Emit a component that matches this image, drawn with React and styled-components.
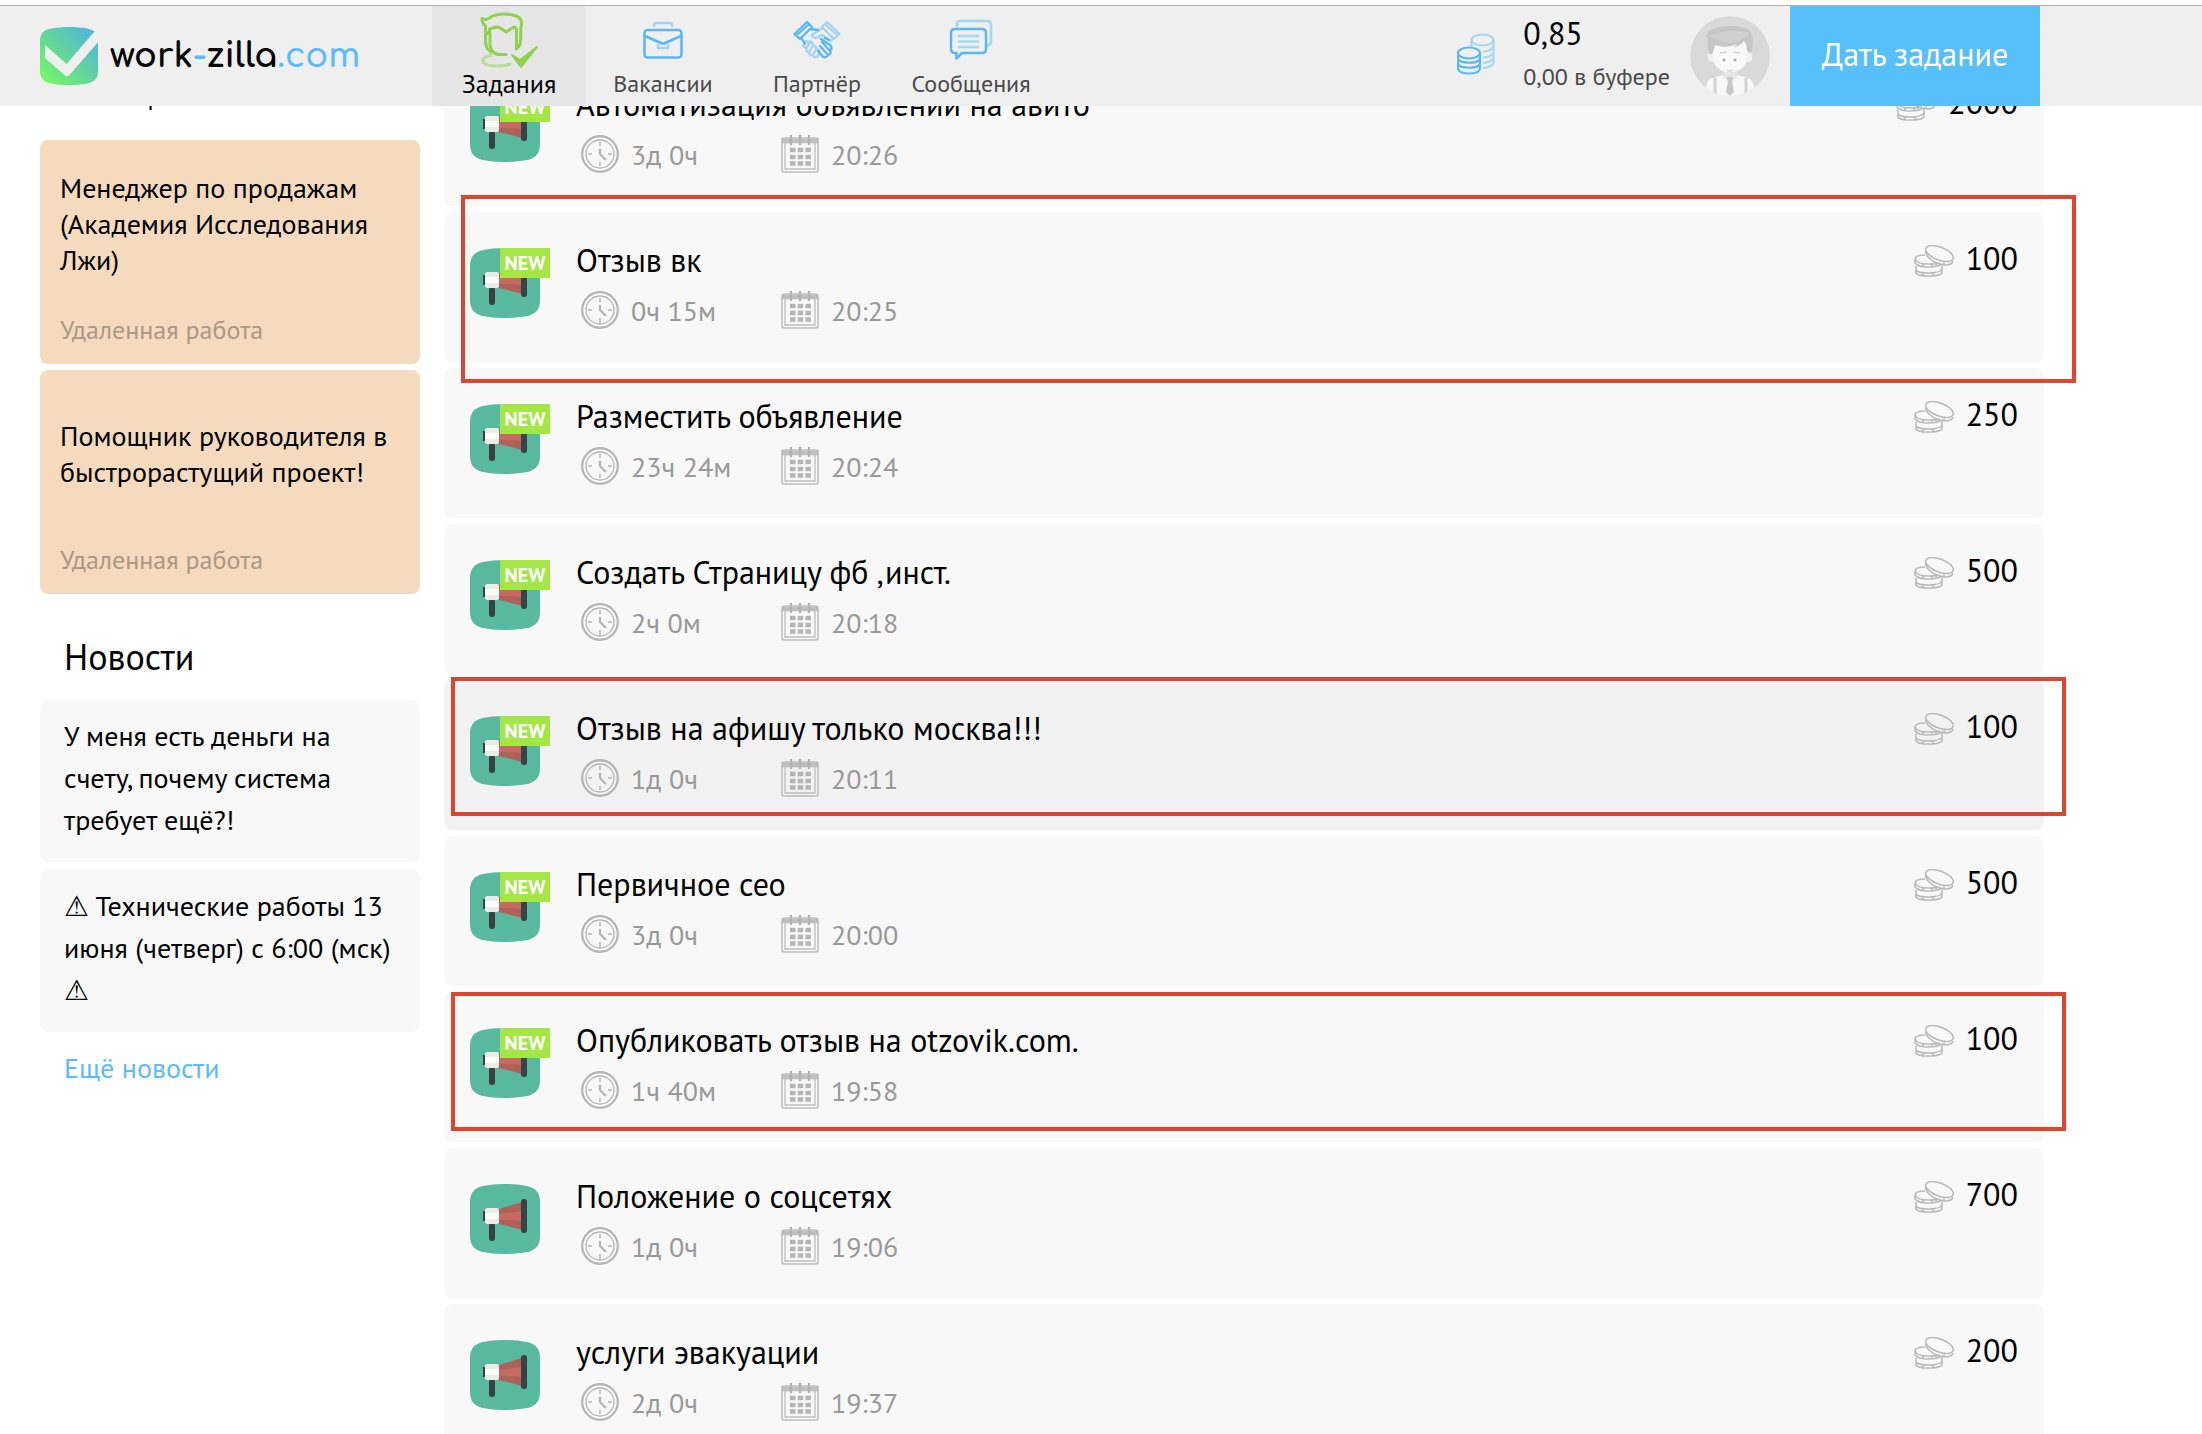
import React from "react";
import styled, { createGlobalStyle, css } from "styled-components";

const vacancies = [
  { id: 1, title: "Менеджер по продажам (Академия Исследования Лжи)", place: "Удаленная работа" },
  { id: 2, title: "Помощник руководителя в быстрорастущий проект!", place: "Удаленная работа" },
];

const news = [
  { id: 1, text: "У меня есть деньги на счету, почему система требует ещё?!" },
  { id: 2, text: "⚠\uFE0E Технические работы 13 июня (четверг) с 6:00 (мск) ⚠\uFE0E" },
];

const tasks = [
  { id: 1, title: "Автоматизация объявлений на авито", term: "3д 0ч", time: "20:26", price: 2000, isNew: true },
  { id: 2, title: "Отзыв вк", term: "0ч 15м", time: "20:25", price: 100, isNew: true, mark: "-17px -32px -21px 17px" },
  { id: 3, title: "Разместить объявление", term: "23ч 24м", time: "20:24", price: 250, isNew: true },
  { id: 4, title: "Создать Страницу фб ,инст.", term: "2ч 0м", time: "20:18", price: 500, isNew: true },
  { id: 5, title: "Отзыв на афишу только москва!!!", term: "1д 0ч", time: "20:11", price: 100, isNew: true, hovered: true, mark: "-3px -22px 14px 7px" },
  { id: 6, title: "Первичное сео", term: "3д 0ч", time: "20:00", price: 500, isNew: true },
  { id: 7, title: "Опубликовать отзыв на otzovik.com.", term: "1ч 40м", time: "19:58", price: 100, isNew: true, mark: "0 -22px 11px 7px" },
  { id: 8, title: "Положение о соцсетях", term: "1д 0ч", time: "19:06", price: 700 },
  { id: 9, title: "услуги эвакуации", term: "2д 0ч", time: "19:37", price: 200 },
];

const LogoIcon = () => (
  <svg width="58" height="58" viewBox="0 0 58 58" aria-hidden="true">
    <defs>
      <linearGradient id="logoFill" x1="0" y1="1" x2="1" y2="0">
        <stop offset="0" stopColor="#75ff62" />
        <stop offset="0.5" stopColor="#63d49b" />
        <stop offset="1" stopColor="#4bb0ea" />
      </linearGradient>
    </defs>
    <path
      d="M0 14C0 6 4 3 11 1.500C22-.5 36-.5 47 1.500C54 3 58 6 58 14V44C58 52 54 55 47 56.500C36 58.500 22 58.500 11 56.500C4 55 0 52 0 44Z"
      fill="url(#logoFill)"
    />
    <path d="M5 18L26.500 37L54 5L60 2V13L29 48.500Q27 50.500 25 48.500L6 32Q5 31 5 29Z" fill="#efefef" />
  </svg>
);

const TasksIcon = () => (
  <svg width="60" height="56" viewBox="0 0 60 56" fill="none" stroke="#8fd150" strokeWidth="3" strokeLinejoin="round" strokeLinecap="round" aria-hidden="true">
    <path d="M12 40C7 37 6.500 33 6.500 27V14C4 12 3 10 3 6.500C7 8.500 9 7 12 5C18 1.500 28 1.500 36 3.500Q43 5.500 42.500 12C41 18 42 24 41.500 29Q41 34 39 35.500" />
    <path d="M8 22Q11 20 10.500 17L17 15Q21 15 27 20L35 15Q38 15 37.500 20V37" />
    <path d="M11 20V33Q12 41 19 42.500H27" />
    <path d="M12 43C-1 46 2 54 18 54Q26 54 31 52" opacity=".5" />
    <path d="M33 43L41 48L58 35L42 55Z" fill="#8fd150" strokeWidth="2" />
  </svg>
);

const BriefcaseIcon = () => (
  <svg width="40" height="38" viewBox="0 0 40 38" fill="none" stroke="#57b9f2" strokeWidth="2.500" strokeLinejoin="round" aria-hidden="true">
    <path d="M11 6V4Q11 2 14 2H26Q29 2 29 4V6M15 23V27H25V23" opacity=".5" />
    <rect x="1.500" y="9" width="37" height="27.500" rx="3" />
    <path d="M2 15L19 22.500H21L38 15" />
  </svg>
);

const HandshakeIcon = () => (
  <svg width="48" height="40" viewBox="0 0 48 40" fill="none" stroke="#57b9f2" strokeWidth="2.300" strokeLinejoin="round" strokeLinecap="round" aria-hidden="true">
    <path d="M14 2L1.500 14L7 19L19 7ZM5 14L15 5M17 9L25 10" />
    <path d="M9 19L12 24M36 20L32 18M37 25L28 19M37 31L29 22M35 35L27 26M37 25Q40 28 37 31Q39 34 35 35Q34 38 30 37L25 31" />
    <g opacity=".48">
      <path d="M34 2L46.500 14L41 19L29 7ZM43 14L33 5M30 8L19 15Q19 18 23 18L29 15L38 21L40 18" />
      <path d="M15 22Q13 20 11 23L10 26Q11 28 14 27Q12 32 16 32Q16 36 20 35Q21 39 25 36L27 32Q26 28 23 30Q24 25 20 26Q20 20 15 22M14 27L17 23M16 32L20 26M20 35L23 30" />
    </g>
  </svg>
);

const MessagesIcon = () => (
  <svg width="44" height="42" viewBox="0 0 44 42" fill="none" stroke="#57b9f2" strokeWidth="2.500" strokeLinejoin="round" strokeLinecap="round" aria-hidden="true">
    <g opacity=".48">
      <path d="M8 7V5Q8 2 11 2H38Q42 2 42 6V22Q42 26 38 27M10 17H29M10 22.500H29M10 28H29" />
    </g>
    <path d="M6 10H33Q37 10 37 14V30Q37 34 33 34H13L7.500 39.500V34H6Q2 34 2 30V14Q2 10 6 10Z" />
  </svg>
);

const BalanceIcon = () => (
  <svg width="38" height="42" viewBox="0 0 38 42" fill="none" stroke="#57b9f2" strokeWidth="2.200" aria-hidden="true">
    <g opacity=".45">
      <ellipse cx="25.500" cy="7" rx="11" ry="5.500" />
      <path d="M14.500 7V14M36.500 7V30Q35 34 26 35M36.500 13Q35 18 26 18.500M36.500 19Q35 24 26 24.500M36.500 25Q35 29 26 30" />
    </g>
    <ellipse cx="12" cy="20" rx="11" ry="5.500" />
    <path d="M1 20V36C3 42 21 42 23 36V20M1 26C3 31 21 31 23 26M1 31C3 36 21 36 23 31" />
  </svg>
);

const AvatarPicture = () => (
  <svg width="80" height="80" viewBox="0 0 80 80" role="img" aria-label="Профиль">
    <clipPath id="avatarClip">
      <circle cx="40" cy="40" r="40" />
    </clipPath>
    <g clipPath="url(#avatarClip)">
      <circle cx="40" cy="40" r="40" fill="#d9d9d9" />
      <path d="M16 80Q15 66 20 63L33 59H48L60 63Q65 66 64 80Z" fill="#f8f8f8" />
      <path d="M33 53H47V61L40 68L33 61Z" fill="#e6e6e6" />
      <path d="M18 36Q16 46 23 46Q28 56 40 56Q52 56 57 46Q64 46 62 36Z" fill="#f0f0f0" />
      <path d="M23 25H57V44Q53 56 40 56Q27 56 23 44Z" fill="#f8f8f8" />
      <path d="M19 38Q17 27 18 23Q14 19 19 15Q28 10 40 10Q58 9 62 18Q64 28 61 38L57 34Q56 27 54 25Q50 30 44 31L47 28Q36 33 25 29Q24 34 22 38Z" fill="#c6c6c6" />
      <path d="M18 20Q38 12 60 17Q50 25 44 27Q30 26 18 20Z" fill="#d0d0d0" />
      <ellipse cx="34" cy="44" rx="4" ry="4.500" fill="#fff" />
      <ellipse cx="45" cy="44" rx="4" ry="4.500" fill="#fff" />
      <circle cx="34" cy="44" r="1.800" fill="#b5b5b5" />
      <circle cx="45" cy="44" r="1.800" fill="#b5b5b5" />
      <path d="M30 37L37 36M43 36L50 37M37 54Q40 56 43 54" stroke="#d2d2d2" strokeWidth="1.500" fill="none" />
      <path d="M37 61H43L42 65L44 76L40 80L36 76L38 65Z" fill="#c9c9c9" />
      <path d="M25 62V80M56 62V80" stroke="#d4d4d4" strokeWidth="3" />
    </g>
  </svg>
);

const MegaphoneIcon = () => (
  <svg width="70" height="70" viewBox="0 0 70 70" aria-hidden="true">
    <path d="M0 18C0 8 5 4 13 2C27-.7 43-.7 57 2C65 4 70 8 70 18V52C70 62 65 66 57 68C43 70.700 27 70.700 13 68C5 66 0 62 0 52Z" fill="#58b99e" />
    <rect x="13" y="27" width="4" height="10" fill="#3a4145" />
    <rect x="19" y="39" width="6" height="18" rx="3" fill="#3a4145" />
    <path d="M29 25L52 18V46L29 40Z" fill="#b0615a" />
    <path d="M29 30L52 27V37L29 35.500Z" fill="#c76a62" />
    <rect x="15" y="24" width="14" height="16" rx="2" fill="#eeeae7" />
    <rect x="15" y="29" width="14" height="6" fill="#fff" />
    <rect x="51" y="15" width="6" height="34" rx="3" fill="#3a4145" />
  </svg>
);

const ClockIcon = () => (
  <svg width="38" height="38" viewBox="0 0 38 38" fill="none" stroke="#b5b5b5" aria-hidden="true">
    <circle cx="19" cy="19" r="17.800" strokeWidth="2.200" />
    <circle cx="19" cy="19" r="14" strokeWidth="1.300" />
    <path d="M19 7V11M19 27V31M7 19H11M27 19H31" strokeWidth="1.500" />
    <path d="M19 14V19L25 25" strokeWidth="2.200" />
  </svg>
);

const CalendarIcon = () => (
  <svg width="38" height="38" viewBox="0 0 38 38" fill="none" stroke="#bdbdbd" aria-hidden="true">
    <rect x="1" y="3" width="36" height="34" rx="2" strokeWidth="1.500" />
    <path d="M4 8V34H34V8" strokeWidth="1.300" />
    <path d="M1 6H37" strokeWidth="4.500" />
    <path d="M10 0V10M19 0V10M28 0V10" strokeWidth="2.200" stroke="#b2b2b2" />
    <path d="M9 15H30M9 22H30M9 28.500H30" strokeWidth="4.500" strokeDasharray="5.500 2.200" stroke="#b5b5b5" />
  </svg>
);

const CoinsIcon = () => (
  <svg width="40" height="32" viewBox="0 0 40 32" fill="none" stroke="#b9b9b9" strokeWidth="1.500" aria-hidden="true">
    <path d="M12 6Q11 9 15 13Q21 19 31 20Q38 20 39 16" />
    <ellipse cx="25.500" cy="8.500" rx="14.500" ry="6.500" transform="rotate(21 25.500 8.500)" />
    <path d="M11 10Q1 10 1 14Q3 19 14 19Q22 19 26 18" />
    <path d="M1 14V18Q4 22 14 22Q24 22 27 19M2 21V25Q4 28 14 28Q26 28 28 24V20M2 25V28Q4 31 14 31Q26 31 28 28V24M9 19V22M18 19V22M9 28V31M19 28V31M22 17V20M30 20V17" />
  </svg>
);

const navItems = [
  { label: "Задания", Icon: TasksIcon, active: true },
  { label: "Вакансии", Icon: BriefcaseIcon },
  { label: "Партнёр", Icon: HandshakeIcon },
  { label: "Сообщения", Icon: MessagesIcon },
];

const TaskItem = ({ item }) => (
  <TaskCard $hovered={item.hovered}>
    <TaskIcon>
      <MegaphoneIcon />
      {item.isNew && <NewBadge>NEW</NewBadge>}
    </TaskIcon>
    <TaskBody>
      <TaskTitle>{item.title}</TaskTitle>
      <TaskInfo>
        <InfoItem>
          <ClockIcon />
          {item.term}
        </InfoItem>
        <InfoItem>
          <CalendarIcon />
          {item.time}
        </InfoItem>
      </TaskInfo>
    </TaskBody>
    <Price>
      <CoinsIcon />
      {item.price}
    </Price>
    {item.mark && <Mark $inset={item.mark} />}
  </TaskCard>
);

const App = () => (
  <Page>
    <GlobalStyle />
    <Header>
      <Logo href="#">
        <LogoIcon />
        <span>
          work<Blue>-</Blue>zilla<Blue $thin>.com</Blue>
        </span>
      </Logo>
      <Nav>
        {navItems.map(({ label, Icon, active }) => (
          <NavItem key={label} href="#" $active={active}>
            <NavIcon>
              <Icon />
            </NavIcon>
            {label}
          </NavItem>
        ))}
      </Nav>
      <Balance>
        <BalanceIcon />
        <div>
          <BalanceSum>0,85</BalanceSum>
          <BalanceBuffer>0,00 в буфере</BalanceBuffer>
        </div>
      </Balance>
      <AvatarPicture />
      <GiveTask type="button">Дать задание</GiveTask>
    </Header>
    <Content>
      <Sidebar>
        <VacancyHeading>
          Посмотреть <a href="#">все вакансии</a>
        </VacancyHeading>
        <VacancyList>
          {vacancies.map((item) => (
            <Vacancy key={item.id}>
              <VacancyTitle>{item.title}</VacancyTitle>
              <VacancyPlace>{item.place}</VacancyPlace>
            </Vacancy>
          ))}
        </VacancyList>
        <NewsHeading>Новости</NewsHeading>
        <NewsList>
          {news.map((item) => (
            <NewsItem key={item.id}>{item.text}</NewsItem>
          ))}
        </NewsList>
        <MoreNews href="#">Ещё новости</MoreNews>
      </Sidebar>
      <TaskList>
        {tasks.map((item) => (
          <TaskItem key={item.id} item={item} />
        ))}
      </TaskList>
    </Content>
  </Page>
);

const GlobalStyle = createGlobalStyle`
  * {
    box-sizing: border-box;
  }
  body {
    margin: 0;
    background: #fff;
    color: #000;
    font-family: "PT Sans", "Noto Sans", sans-serif;
  }
  a {
    color: inherit;
    text-decoration: none;
  }
  svg {
    flex: none;
    display: block;
  }
`;

const Page = styled.div`
  height: 100vh;
  overflow: hidden;
`;

const Header = styled.header`
  position: sticky;
  top: 0;
  z-index: 2;
  display: flex;
  align-items: center;
  height: 106px;
  padding-right: 162px;
  border-top: 5px solid #fff;
  background: #efefef;
  box-shadow: inset 0 1px 0 #b0b0b0;
`;

const Logo = styled.a`
  display: flex;
  align-items: center;
  gap: 12px;
  width: 432px;
  padding-left: 40px;
  font-family: Comfortaa, Lato, sans-serif;
  font-size: 34px;
  font-weight: 700;
  line-height: 48px;
`;

const Blue = styled.span`
  color: #5cbcf6;
  font-weight: ${({ $thin }) => ($thin ? 600 : 700)};
`;

const Nav = styled.nav`
  display: flex;
  align-self: stretch;
  padding-top: 1px;
`;

const NavItem = styled.a`
  display: flex;
  flex-direction: column;
  align-items: center;
  width: 154px;
  color: #4a4a4a;
  font-size: 24px;
  line-height: 32px;
  ${({ $active }) =>
    $active &&
    css`
      background: #e6e6e6;
      color: #000;
      font-size: 26px;
    `}
`;

const NavIcon = styled.span`
  display: flex;
  align-items: center;
  height: 62px;
  padding-top: 6px;
`;

const Balance = styled.div`
  display: flex;
  align-items: center;
  gap: 28px;
  margin-left: auto;
  margin-right: 20px;

  svg {
    margin-bottom: 4px;
  }
`;

const BalanceSum = styled.div`
  font-size: 32px;
  line-height: 42px;
`;

const BalanceBuffer = styled.div`
  color: #4a4a4a;
  font-size: 24px;
  line-height: 46px;
`;

const GiveTask = styled.button`
  align-self: stretch;
  width: 250px;
  margin-left: 20px;
  margin-top: 1px;
  padding: 0 0 4px;
  border: 0;
  background: #57bff9;
  color: #fff;
  font-family: inherit;
  font-size: 32px;
`;

const Content = styled.main`
  display: grid;
  grid-template-columns: 380px 1fr;
  gap: 24px;
  align-items: start;
  margin-top: -50px;
  padding: 0 158px 0 40px;
`;

const Sidebar = styled.aside`
  display: flex;
  flex-direction: column;
`;

const VacancyHeading = styled.h2`
  margin: 0;
  padding: 20px 24px 24px;
  font-size: 26px;
  font-weight: 400;
  line-height: 40px;

  a {
    color: #5cbcf6;
  }
`;

const VacancyList = styled.div`
  display: grid;
  gap: 6px;
`;

const Vacancy = styled.article`
  display: flex;
  flex-direction: column;
  height: 224px;
  padding: 8px 20px 14px;
  border-radius: 8px;
  background: #f5dabe;
`;

const VacancyTitle = styled.h3`
  display: flex;
  align-items: center;
  flex: 1;
  margin: 0;
  padding-bottom: 10px;
  font-size: 28px;
  font-weight: 400;
  line-height: 36px;
`;

const VacancyPlace = styled.p`
  margin: 0;
  color: #ac9984;
  font-size: 26px;
  line-height: 40px;
`;

const NewsHeading = styled.h2`
  margin: 0;
  padding: 39px 24px 19px;
  font-size: 36px;
  font-weight: 400;
  line-height: 48px;
`;

const NewsList = styled.div`
  display: grid;
  gap: 8px;
`;

const NewsItem = styled.article`
  padding: 15px 24px 21px;
  border-radius: 8px;
  background: #f8f8f8;
  font-size: 28px;
  line-height: 42px;
`;

const MoreNews = styled.a`
  padding: 16px 24px;
  color: #5cbcf6;
  font-size: 28px;
  line-height: 40px;
`;

const TaskList = styled.section`
  display: grid;
  gap: 6px;
`;

const TaskCard = styled.article`
  position: relative;
  display: flex;
  height: 150px;
  padding: 26px;
  border-radius: 8px;
  background: ${({ $hovered }) => ($hovered ? "#f2f2f2" : "#f8f8f8")};
`;

const TaskIcon = styled.div`
  position: relative;
  width: 106px;
  padding-top: 10px;
`;

const NewBadge = styled.span`
  position: absolute;
  top: 10px;
  left: 30px;
  width: 50px;
  background: #a3e645;
  color: #fff;
  font-size: 20px;
  font-weight: 700;
  line-height: 30px;
  text-align: center;
`;

const TaskBody = styled.div`
  flex: 1;
`;

const TaskTitle = styled.h3`
  margin: 0;
  font-size: 32px;
  font-weight: 400;
  line-height: 44px;
`;

const TaskInfo = styled.div`
  display: flex;
  padding: 8px 5px;
`;

const InfoItem = styled.div`
  display: flex;
  align-items: center;
  gap: 12px;
  width: 200px;
  color: #999;
  font-size: 28px;
  line-height: 42px;

  svg {
    margin-bottom: 2px;
  }
`;

const Price = styled.div`
  display: flex;
  align-items: center;
  gap: 12px;
  height: 40px;
  font-size: 32px;

  svg {
    margin-top: 6px;
  }
`;

const Mark = styled.span`
  position: absolute;
  inset: ${({ $inset }) => $inset};
  z-index: 1;
  border: 4px solid #de4530;
  pointer-events: none;
`;

export default App;
